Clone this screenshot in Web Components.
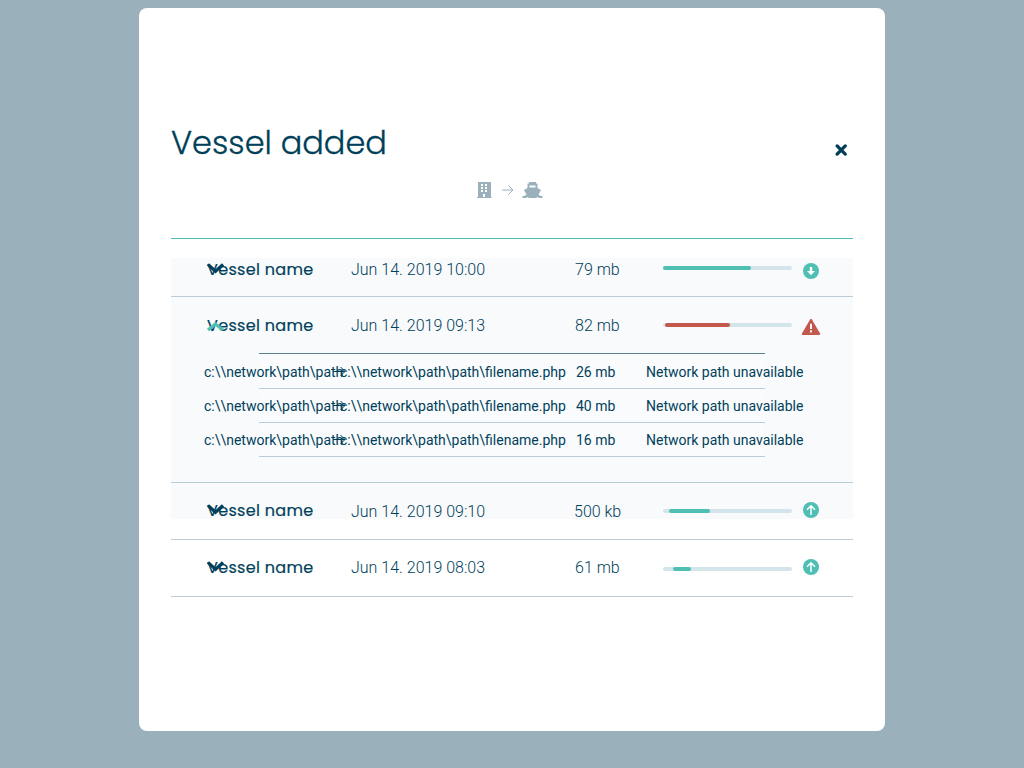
<!DOCTYPE html>
<html lang="en">
<head>
<meta charset="utf-8">
<title>Vessel added</title>
<style>
html,body{margin:0;height:100%;background:#9ab1bb;overflow:hidden}
body{color:#003f5a;font-family:Roboto,"Liberation Sans",sans-serif}
</style>
</head>
<body>
<vessel-dialog heading="Vessel added">
  <transfer-row name="Vessel name" date="Jun 14. 2019 10:00" size="79 mb" from="0" to="88" icon="down" style="--row-h:57px;--row-pad:1px;--name-y:3px;--text-y:3px;--bar-y:1px;--icon-y:4px"></transfer-row>
  <transfer-row name="Vessel name" date="Jun 14. 2019 09:13" size="82 mb" from="2" to="67" icon="warn" open style="--name-y:1px;--text-y:1px;--icon-y:2px">
    <file-row size="26 mb"></file-row>
    <file-row size="40 mb"></file-row>
    <file-row size="16 mb"></file-row>
  </transfer-row>
  <transfer-row name="Vessel name" date="Jun 14. 2019 09:10" size="500 kb" from="6" to="47" icon="up" style="--text-y:1px;--icon-y:-1px"></transfer-row>
  <transfer-row name="Vessel name" date="Jun 14. 2019 08:03" size="61 mb" from="10" to="28" icon="up" style="--bar-y:1px;--icon-y:-1px"></transfer-row>
</vessel-dialog>

<script>
class VesselDialog extends HTMLElement {
  constructor() {
    super();
    this.attachShadow({mode: 'open'}).innerHTML = `
<style>
:host{display:flex;flex-direction:column;box-sizing:border-box;width:746px;height:723px;margin:8px auto 0;padding:115px 32px 0;background:#fff;border-radius:8px}
header{display:flex;justify-content:space-between;height:56px}
h1{margin:0;font:300 32px/40px Poppins,Inter,sans-serif;font-feature-settings:"cv11";-webkit-text-stroke:.3px currentColor;white-space:nowrap}
.close{width:12px;height:12px;margin:21px 6px 0 0;overflow:visible}
.route{display:flex;align-items:center;height:22px;margin-left:305px;color:#9ab1bb}
.route svg{display:block}
.b{width:16px;height:18px}.a{width:13px;height:12px;margin:0 8px 0 9px}.s{width:21px;height:18px}
.list{margin-top:37px;border-top:1px solid #4cbfb4;background:linear-gradient(#f9fafc,#f9fafc) 0 19px/100% 261px no-repeat}
</style>
<header><h1></h1>
<svg class="close" viewBox="0 0 12 12"><path d="M2.100 1.900 10.300 10.100M10.300 1.900 2.100 10.100" stroke="currentColor" stroke-width="3.300" stroke-linecap="round"/></svg></header>
<div class="route">
<svg class="b" viewBox="0 0 16 18" fill="currentColor"><path fill-rule="evenodd" d="M2 1h13v15h.5v1H1v-1h1zM5 3v2h2V3zm4 0v2h2V3zM5 6v2h2V6zm4 0v2h2V6zM5 9v2h2V9zm4 0v2h2V9zM7 13v3h2v-3z"/></svg>
<svg class="a" viewBox="0 0 13 12" fill="none" stroke="currentColor"><path d="M1 6h11M7.500 1.500 12 6 7.500 10.500"/></svg>
<svg class="s" viewBox="0 0 21 18" fill="currentColor"><path fill-rule="evenodd" d="M7 1h7v1.500h1.500V7L19 9l-2.500 4.500c1 1.300 2 1.500 4 1.500v2H.5v-2c2 0 3-.2 4-1.500L2 9l3.500-2V2.500H7zM7.500 4.500V6.500h6V4.500zM5.500 16.100l1.500.9H4zM15.500 16.100l1.500.9h-3z"/></svg>
</div>
<div class="list"><slot></slot></div>`;
  }
  connectedCallback() { this.shadowRoot.querySelector('h1').textContent = this.getAttribute('heading'); }
}

const STATUS = {
  down: '<circle cx="10" cy="9" r="8" fill="#4fbfb4"/><path d="M10 5v5" stroke="#fff" stroke-width="2.4"/><path d="M6 9h8L10 13.200z" fill="#fff"/>',
  up: '<circle cx="10" cy="9" r="8" fill="#4fbfb4"/><path d="M10 14V4.800M6 8.700l4-4 4 4" fill="none" stroke="#fff" stroke-width="1.500"/>',
  warn: '<path d="M10 1.800 18.300 16H1.700z" fill="#c3584d" stroke="#c3584d" stroke-width="1.800" stroke-linejoin="round"/><path d="M10 5.800v5.200M10 12.200v2.200" stroke="#fff" stroke-width="1.900"/>'
};

class TransferRow extends HTMLElement {
  constructor() { super(); this.attachShadow({mode: 'open'}); }
  connectedCallback() {
    const g = n => this.getAttribute(n), open = this.hasAttribute('open');
    this.shadowRoot.innerHTML = `
<style>
:host{display:block;border-bottom:1px solid #b9cdd7}
:host([open]){padding-bottom:25px}
.row{display:grid;grid-template-columns:144px 224px 88px 129px 20px;align-items:center;height:var(--row-h,56px);padding:0 0 var(--row-pad,0px) 36px;box-sizing:border-box}
.name{position:relative;font:400 16px/20px Poppins,Inter,sans-serif;font-feature-settings:"cv11";letter-spacing:.32px;-webkit-text-stroke:.2px currentColor;white-space:nowrap;transform:translateY(var(--name-y,0px))}
.text{font:300 16px/20px Roboto,sans-serif;white-space:nowrap;transform:translateY(var(--text-y,0px))}
.size{margin-left:${g('size').length > 5 ? -1 : 0}px}
.chev{position:absolute;left:0;top:${open ? 5 : 3}px;width:17px;height:10px;overflow:visible}
.bar{display:flex;height:4px;border-radius:2px;background:#d3e4eb;transform:translateY(var(--bar-y,0px))}
.fill{width:${g('to') - g('from')}px;margin-left:${g('from')}px;border-radius:2px;background:${g('icon') === 'warn' ? '#c3584d' : '#4fbfb4'}}
.status{width:20px;height:18px;margin-left:9px;transform:translateY(var(--icon-y,0px))}
.files{width:506px;margin-left:88px;padding-top:1px;border-top:1px solid #597f91}
</style>
<div class="row">
<div class="name">${g('name')}<svg class="chev" viewBox="0 0 17 10" fill="none" stroke="${open ? '#4fbfb4' : 'currentColor'}" stroke-width="3.200"><path d="${open ? 'M1 9 8.500 3 16 9' : 'M1 1.300 8.500 8.300 16 1.300'}"/></svg></div>
<div class="text">${g('date')}</div>
<div class="text size">${g('size')}</div>
<div class="bar"><div class="fill"></div></div>
<svg class="status" viewBox="0 0 20 18">${STATUS[g('icon')]}</svg>
</div>
${open ? '<div class="files"><slot></slot></div>' : ''}`;
  }
}

class FileRow extends HTMLElement {
  constructor() { super(); this.attachShadow({mode: 'open'}); }
  connectedCallback() {
    this.shadowRoot.innerHTML = `
<style>
:host{display:grid;grid-template-columns:136px 236px 70px 160px;align-items:center;height:33px;border-bottom:1px solid #b9cdd7;font:400 14px/20px Roboto,sans-serif;white-space:nowrap;background:linear-gradient(#fafbfd,#fafbfd) 0 0/506px 100% no-repeat}
span{margin-left:-55px}
.to{position:relative}
.to svg{position:absolute;left:-7px;top:4px;width:13px;height:11px}
</style>
<span>c:\\\\network\\path\\path</span>
<span class="to">c:\\\\network\\path\\path\\filename.php<svg viewBox="0 0 13 11" fill="none" stroke="currentColor"><path d="M0 5.500h12M7.500 1 12 5.500 7.500 10"/></svg></span>
<span class="size">${this.getAttribute('size')}</span>
<span class="msg">Network path unavailable</span>`;
  }
}
customElements.define('vessel-dialog', VesselDialog);
customElements.define('transfer-row', TransferRow);
customElements.define('file-row', FileRow);
</script>
</body>
</html>
